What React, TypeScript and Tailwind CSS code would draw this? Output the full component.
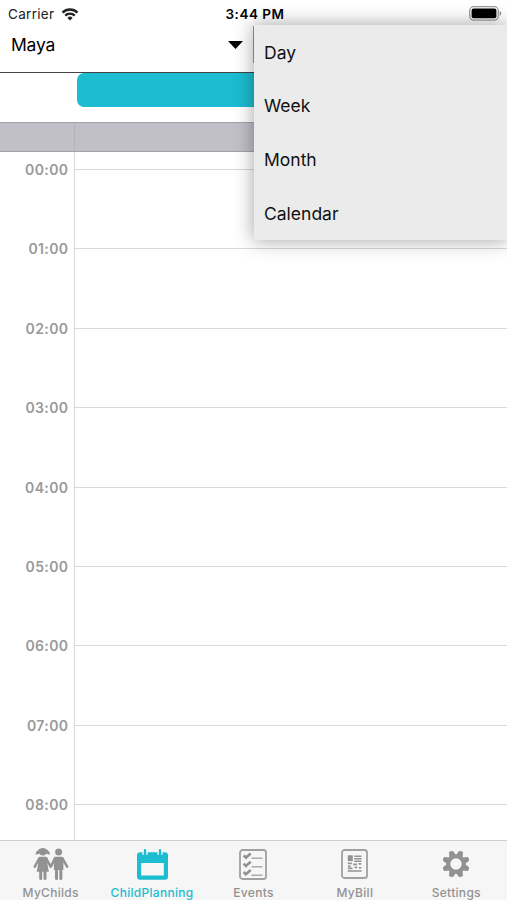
interface TabIconProps {
  className?: string
}

const hours = ['00:00', '01:00', '02:00', '03:00', '04:00', '05:00', '06:00', '07:00', '08:00']

const viewOptions = ['Day', 'Week', 'Month', 'Calendar']

function WifiIcon() {
  return (
    <svg className="ml-[7px] h-[13px] w-[18px]" viewBox="0 0 17 13" fill="none" stroke="currentColor" strokeWidth="2.3">
      <path d="M1 4.6A10.6 10.6 0 0 1 16 4.6" />
      <path d="M3.7 7.6A6.8 6.8 0 0 1 13.3 7.6" />
      <path d="M8.5 12.6 5.9 9.9a3.7 3.7 0 0 1 5.2 0Z" fill="currentColor" stroke="none" />
    </svg>
  )
}

function BatteryIcon() {
  return (
    <svg className="h-[15px] w-[33px]" viewBox="0 0 33 15">
      <rect x="0.7" y="0.7" width="28.6" height="13.4" rx="4" fill="#fff" stroke="#9c9c9c" strokeWidth="1.3" />
      <rect x="2.6" y="2.6" width="24.8" height="9.6" rx="2" fill="#000" />
      <path d="M30.7 5v4.8c2-.8 2-4 0-4.8Z" fill="#8c8c8c" />
    </svg>
  )
}

function ChildrenIcon({ className }: TabIconProps) {
  return (
    <svg className={className} viewBox="0 0 36 34" fill="currentColor" stroke="currentColor">
      <g stroke="none">
        <circle cx="9.8" cy="4.8" r="3.8" />
        <path d="M7 1.6 3.4 4.4 2.4 7.8 6.6 6.8ZM12.6 1.6l3.6 2.8 1 3.4-4.2-1Z" />
        <path d="M6.6 9.8h6.4l1.5 1.6v6l1.4 7.4H3.7L5.1 17.4v-6Z" />
        <circle cx="25.6" cy="5" r="3.5" />
        <path d="M22.2 9.8h6.8l1.4 1.6V23h-9.6V11.4Z" />
      </g>
      <g fill="none" strokeWidth="2.5" strokeLinecap="round">
        <path d="M6.4 11.4 1.8 19.6M13.2 11.4l4.4 8.2M22 11.4l-4.2 8.2M29.4 11.4l4.7 8.2" />
        <path d="M7.7 24v7.6M12 24v7.6M23.5 22v9.6M27.8 22v9.6" strokeWidth="3" />
      </g>
    </svg>
  )
}

function PlanningIcon({ className }: TabIconProps) {
  return (
    <svg className={className} viewBox="0 0 31 31" fill="currentColor">
      <path
        fillRule="evenodd"
        d="M3 3.2h2.4v2.6h5.2V3.2h9.8v2.6h5.2V3.2H28a3 3 0 0 1 3 3v21.6a3 3 0 0 1-3 3H3a3 3 0 0 1-3-3V6.2a3 3 0 0 1 3-3ZM4.2 14v12.4h22.6V14Z"
      />
      <path d="M8 1.2v6M23 1.2v6" stroke="currentColor" strokeWidth="2.4" strokeLinecap="round" />
    </svg>
  )
}

function EventsIcon({ className }: TabIconProps) {
  return (
    <svg className={className} viewBox="0 0 28 31" fill="none" stroke="currentColor">
      <rect x="1" y="1" width="26" height="29" rx="2.6" strokeWidth="1.8" opacity="0.85" />
      <path d="m4.7 6.3 2.2 2.3 4.8-4.2M4.7 14.6l2.2 2.3 4.8-4.2M4.7 23l2.2 2.3 4.8-4.2" strokeWidth="2.6" />
      <path d="M12.5 9.3h11M12.5 17.8h11M12.5 26.3h11" strokeWidth="1.4" opacity="0.75" />
    </svg>
  )
}

function BillIcon({ className }: TabIconProps) {
  return (
    <svg className={className} viewBox="0 0 27 30" fill="none" stroke="currentColor">
      <rect x="1" y="1" width="25" height="28" rx="2.6" strokeWidth="1.8" opacity="0.85" />
      <path d="M6.8 6.3h5v5.8h-5Z" fill="currentColor" stroke="none" />
      <path d="M13.3 7.2h7.2M13.3 9.7h7.2M13.3 12.2h7.2" strokeWidth="1.6" />
      <path d="M6.8 14.4h4M6.8 17.2h3M12.2 15.4h3.8M17.6 14.9h2.6M6.8 19.4h4.6M13.5 18.4h2.6M17.8 18.8h2.6M6.8 22h13.7" strokeWidth="1.6" />
    </svg>
  )
}

function SettingsIcon({ className }: TabIconProps) {
  return (
    <svg className={className} viewBox="-13 -13 26 26" fill="currentColor">
      <circle r="7.6" fill="none" stroke="currentColor" strokeWidth="3.8" />
      {[22.5, 67.5, 112.5, 157.5, 202.5, 247.5, 292.5, 337.5].map((angle) => (
        <path key={angle} d="M-3.7-8-1.9-13.8h3.8l1.8 5.8Z" transform={`rotate(${angle})`} />
      ))}
    </svg>
  )
}

const tabs = [
  { label: 'MyChilds', icon: <ChildrenIcon className="h-[34px] w-9" />, active: false },
  { label: 'ChildPlanning', icon: <PlanningIcon className="h-[31px] w-[31px]" />, active: true },
  { label: 'Events', icon: <EventsIcon className="h-[31px] w-7" />, active: false },
  { label: 'MyBill', icon: <BillIcon className="h-[30px] w-[27px]" />, active: false },
  { label: 'Settings', icon: <SettingsIcon className="h-[26px] w-[26px]" />, active: false },
]

function StatusBar() {
  return (
    <div className="grid h-[26px] grid-cols-3 items-center pt-[2px] pr-[5px] pl-2 text-[13.5px] text-[#222]">
      <div className="flex items-center tracking-[0.3px]">
        Carrier
        <WifiIcon />
      </div>
      <div className="text-center font-semibold tracking-[0.5px] text-black">3:44 PM</div>
      <div className="flex justify-end pb-[2px]">
        <BatteryIcon />
      </div>
    </div>
  )
}

function ViewMenu() {
  return (
    <ul className="absolute top-[25px] right-0 left-[254px] z-10 h-[215px] bg-[#ebebeb] shadow-[0_0_18px_1px_rgba(0,0,0,0.34)]">
      {viewOptions.map((option) => (
        <li key={option} className="flex h-[53.75px] items-center pt-[1.5px] pl-[10px] text-[17.5px] text-[#111]">
          {option}
        </li>
      ))}
    </ul>
  )
}

export default function App() {
  return (
    <div className="relative flex h-[900px] w-full flex-col overflow-hidden bg-white font-['Inter',sans-serif]">
      <StatusBar />

      <header className="flex h-[47px] shrink-0 border-b border-[#444]">
        <div className="flex h-[37px] w-[254px] items-center justify-between border-r border-[#999] pr-[10px] pl-[11px] text-[17.5px] text-black">
          <span className="pt-px tracking-[-0.2px]">Maya</span>
          <svg className="h-2 w-[15px]" viewBox="0 0 15 8">
            <path d="M0 0h15L7.5 8Z" />
          </svg>
        </div>
      </header>

      <div className="h-[49px] shrink-0 pl-[77px]">
        <div className="h-[34px] rounded-l-[7px] bg-[#1cbcd1]" />
      </div>

      <div className="flex h-[30px] shrink-0 border-y border-[#a3a2a8] bg-[#c1c0c9]">
        <div className="w-[75px] border-r border-[#b4b3bb]" />
      </div>

      <main className="flex min-h-0 flex-1 overflow-hidden">
        <div className="w-[75px] shrink-0 border-r border-[#d9d9d9] pr-[5.5px] text-right text-[14px] font-semibold tracking-[0.4px] text-[#999]">
          {hours.map((hour) => (
            <div key={hour} className="h-[79.4px] pt-[8px] leading-[20px]">
              {hour}
            </div>
          ))}
        </div>
        <div className="flex-1 pt-[17px]">
          {hours.map((hour) => (
            <div key={hour} className="h-[79.4px] border-t border-[#d9d9d9]" />
          ))}
        </div>
      </main>

      <nav className="grid h-[60px] shrink-0 grid-cols-5 border-t border-[#cfcfcf] bg-[#f6f6f6]">
        {tabs.map((tab) => (
          <div
            key={tab.label}
            className={`flex flex-col items-center text-[12px] font-medium tracking-[0.3px] ${tab.active ? 'text-[#1cbcd1]' : 'text-[#929292]'}`}
          >
            <div className="flex h-[43px] items-center pt-[3px]">{tab.icon}</div>
            <span className="leading-[17px]">{tab.label}</span>
          </div>
        ))}
      </nav>

      <ViewMenu />
    </div>
  )
}
